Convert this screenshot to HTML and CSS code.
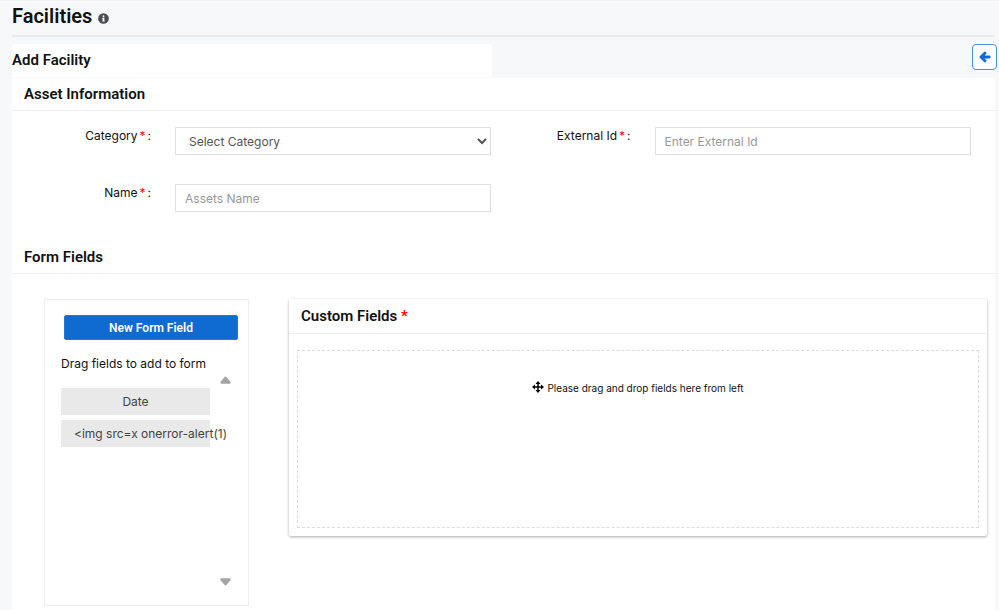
FILE: index.html
```html
<!DOCTYPE html>
<html lang="en">
<head>
    <meta charset="UTF-8">
    <meta name="viewport" content="width=device-width, initial-scale=1.0">
    <title>Facilities</title>
    <link rel="stylesheet" href="styles.css">
</head>
<body>
    <header class="page-header">
        <h1>Facilities</h1>
        <svg class="info-icon" viewBox="0 0 512 512" aria-hidden="true">
            <circle cx="256" cy="256" r="248" fill="#4a4d52"/>
            <path fill="#f7f8fa" d="M256 110a42 42 0 1 1 0 84a42 42 0 1 1 0-84zM200 220h96v136h24v44H192v-44h24v-92h-16z"/>
        </svg>
    </header>

    <div class="title-row">
        <h2 class="title">Add Facility</h2>
        <button type="button" class="btn-back" aria-label="Back">
            <svg viewBox="0 0 448 512" aria-hidden="true">
                <path fill="#0f6bd0" stroke="#0f6bd0" stroke-width="50" d="M257.500 445.100l-22.200 22.200c-9.400 9.400-24.600 9.400-33.900 0L7 273c-9.400-9.400-9.400-24.600 0-33.900L201.400 44.700c9.400-9.400 24.600-9.400 33.900 0l22.200 22.200c9.500 9.500 9.300 25-.4 34.300L136.600 216H424c13.300 0 24 10.700 24 24v32c0 13.300-10.700 24-24 24H136.600l120.500 114.800c9.800 9.300 10 24.800.4 34.300z"/>
            </svg>
        </button>
    </div>

    <form class="card">
        <h3 class="section-title">Asset Information</h3>
        <div class="fields">
            <div class="field">
                <label for="category">Category<span class="req">*</span>:</label>
                <select id="category" class="control">
                    <option>Select Category</option>
                </select>
            </div>
            <div class="field">
                <label for="external-id">External Id<span class="req">*</span>:</label>
                <input id="external-id" class="control" type="text" placeholder="Enter External Id">
            </div>
            <div class="field">
                <label for="name">Name<span class="req">*</span>:</label>
                <input id="name" class="control" type="text" placeholder="Assets Name">
            </div>
        </div>

        <h3 class="section-title">Form Fields</h3>
        <div class="builder">
            <div class="palette">
                <button type="button" class="btn-new">New Form Field</button>
                <p class="hint">Drag fields to add to form</p>
                <div class="palette-body">
                    <ul class="palette-list">
                        <li draggable="true">Date</li>
                        <li draggable="true">&lt;img src=x onerror-alert(1)&gt;</li>
                    </ul>
                    <div class="scroller">
                        <button type="button" class="scroll-btn" aria-label="Scroll up">
                            <svg viewBox="0 0 12 8" aria-hidden="true"><path fill="#a5a5a5" d="M5 .6Q6-.4 7 .6L11.400 6Q12 8 10.500 8h-9Q0 8 .6 6z"/></svg>
                        </button>
                        <button type="button" class="scroll-btn" aria-label="Scroll down">
                            <svg viewBox="0 0 12 8" aria-hidden="true"><path fill="#a5a5a5" d="M5 7.400Q6 8.400 7 7.400L11.400 2Q12 0 10.500 0h-9Q0 0 .6 2z"/></svg>
                        </button>
                    </div>
                </div>
            </div>

            <div class="custom">
                <h3 class="section-title">Custom Fields <span class="star">*</span></h3>
                <div class="dropzone">
                    <svg class="move-icon" viewBox="0 0 24 24" aria-hidden="true">
                        <path d="M12 0l5 6h-3.500v4.500H18V7l6 5-6 5v-3.500h-4.500V18H17l-5 6-5-6h3.500v-4.500H6V17l-6-5 6-5v3.500h4.500V6H7z"/>
                    </svg>
                    <span>Please drag and drop fields here from left</span>
                </div>
            </div>
        </div>
    </form>
</body>
</html>
```
FILE: styles.css
```css
* {
    box-sizing: border-box;
}
html {
    background-color: #fff;
}
body {
    margin: 0;
    padding: 0 4px 0 12px;
    background-color: #f7f8fa;
    border-top: 1px solid #f1f2f4;
    font-family: Inter, sans-serif;
    font-size: 12px;
    line-height: 16px;
    color: #111;
}
h1, h2, h3, p, ul {
    margin: 0;
    padding: 0;
}
h1, h2, h3 {
    font-family: Roboto, sans-serif;
    font-weight: 600;
}
.page-header {
    display: flex;
    align-items: center;
    gap: 6px;
    padding: 3px 0 7px;
    border-bottom: 2px solid #e8eaec;
}
h1 {
    font-size: 20px;
    line-height: 24px;
}
.info-icon {
    width: 11px;
    height: 11px;
    margin-top: 5px;
}
.title-row {
    display: flex;
    justify-content: space-between;
    align-items: flex-start;
    margin: 7px -2px 1px 0;
}
.title {
    width: calc(50% - 13px);
    background-color: #fff;
    font-size: 15px;
    line-height: 33px;
}
.btn-back {
    width: 25px;
    height: 26px;
    padding: 0;
    display: flex;
    justify-content: center;
    align-items: center;
    background-color: #fff;
    border: 1px solid #4a90de;
    border-radius: 4px;
    cursor: pointer;
}
.btn-back svg {
    width: 10px;
    height: 12px;
    overflow: visible;
}
.card {
    background-color: #fff;
}
.section-title {
    padding: 0 12px;
    font-size: 15px;
    line-height: 32px;
    border-bottom: 1px solid #eee;
}
.req, .star {
    color: #f00;
}
.req {
    margin: 0 2px;
}
.fields {
    display: grid;
    grid-template-columns: 1fr 1fr;
    row-gap: 29px;
    padding: 16px 24px 29px 0;
}
.field {
    display: grid;
    grid-template-columns: 34% 66%;
}
.field label {
    padding: 1px 24px 0 0;
    text-align: right;
}
.control {
    width: 100%;
    height: 28px;
    padding: 0 9px;
    font-family: inherit;
    font-size: 12px;
    color: #555;
    background-color: #fff;
    border: 1px solid #e0e0e0;
    border-radius: 0;
}
.control::placeholder {
    color: #999;
}
.builder {
    display: flex;
    align-items: flex-start;
    gap: 40px;
    padding: 25px 8px 4px 32px;
}
.palette {
    width: 205px;
    padding: 15px 10px 19px 16px;
    border: 1px solid #eee;
}
.btn-new {
    display: block;
    width: 174px;
    height: 25px;
    margin: 0 0 0 3px;
    padding: 0;
    font-family: Roboto, sans-serif;
    font-size: 12px;
    font-weight: 600;
    color: #fff;
    background-color: #0f6bd0;
    border: 1px solid #2477d6;
    border-radius: 2px;
    cursor: pointer;
}
.hint {
    margin-top: 16px;
}
.palette-body {
    display: flex;
    height: 214px;
}
.palette-list {
    width: 165px;
    margin-right: -7px;
    padding-top: 16px;
    overflow: hidden;
    list-style: none;
}
.palette-list li {
    width: 149px;
    margin-bottom: 5px;
    padding: 0 13px;
    line-height: 27px;
    text-align: center;
    white-space: nowrap;
    color: #444;
    background-color: #e9e9e9;
    cursor: move;
}
.scroller {
    display: flex;
    flex-direction: column;
    justify-content: space-between;
    padding-top: 4px;
}
.scroll-btn {
    display: flex;
    padding: 0 1px;
    background: none;
    border: none;
    cursor: pointer;
}
.scroll-btn svg {
    width: 11px;
    height: 8px;
}
.custom {
    flex: 1;
    padding-bottom: 8px;
    border-radius: 2px;
    box-shadow: 0 1px 3px rgba(0, 0, 0, 0.35);
}
.custom .section-title {
    line-height: 34px;
}
.dropzone {
    display: flex;
    justify-content: center;
    gap: 3px;
    min-height: 178px;
    margin: 16px 8px 0;
    padding-top: 29px;
    font-size: 10px;
    border: 1px dashed #ddd;
}
.move-icon {
    width: 12px;
    height: 12px;
    margin-top: 1px;
}
```
